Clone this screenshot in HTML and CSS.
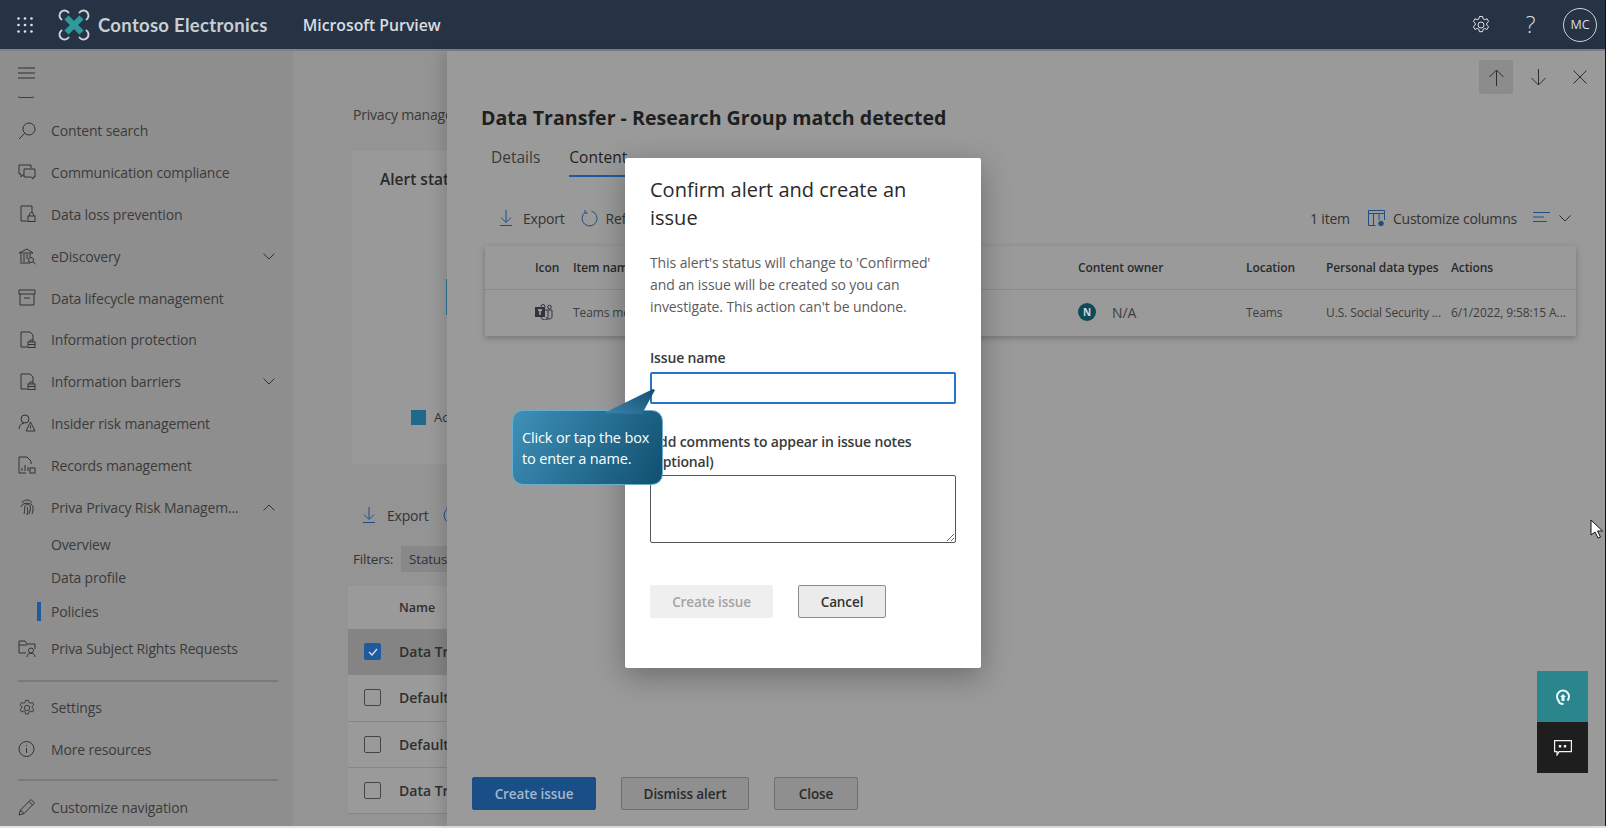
FILE: index.html
```html
<!DOCTYPE html>
<html lang="en">
<head>
  <title>Microsoft Purview</title>
  <meta charset="UTF-8">
  <link rel="stylesheet" href="styles.css">
</head>
<body>
<div class="shell">
  <header class="topbar">
    <svg class="waffle" width="16" height="16" viewBox="0 0 16 16" fill="#dfe3e6"><circle cx="1.5" cy="1.5" r="1.3"/><circle cx="8" cy="1.5" r="1.3"/><circle cx="14.5" cy="1.5" r="1.3"/><circle cx="1.5" cy="8" r="1.3"/><circle cx="8" cy="8" r="1.3"/><circle cx="14.5" cy="8" r="1.3"/><circle cx="1.5" cy="14.5" r="1.3"/><circle cx="8" cy="14.5" r="1.3"/><circle cx="14.5" cy="14.5" r="1.3"/></svg>
    <svg class="logo" width="32" height="32" viewBox="0 0 32 32" fill="none"><path d="M8.500 8.500 23.500 23.500M23.500 8.500 8.500 23.500" stroke="#2f9a9c" stroke-width="6"/><g stroke="#ccd3d6" stroke-width="2" stroke-linecap="round"><path d="M3.500 10.500A5 5 0 1 1 10.500 3.500"/><path d="M21.500 3.500A5 5 0 1 1 28.500 10.500"/><path d="M28.500 21.500A5 5 0 1 1 21.500 28.500"/><path d="M10.500 28.500A5 5 0 1 1 3.500 21.500"/></g></svg>
    <span class="brand">Contoso Electronics</span>
    <span class="product">Microsoft Purview</span>
    <div class="topbar-right">
      <svg width="20" height="20" viewBox="0 0 20 20" fill="none" stroke="#dfe3e6"><circle cx="10" cy="10" r="3"/><path d="M8.400 1.500h3.200l.5 2.400 1.700.8 2.200-1 1.600 2.800-1.800 1.600v2l1.800 1.600-1.600 2.800-2.200-1-1.700.8-.5 2.400H8.400l-.5-2.400-1.700-.8-2.200 1-1.600-2.800 1.800-1.600v-2L2.400 6.500 4 3.700l2.200 1 1.700-.8z"/></svg>
      <span class="help">?</span>
      <span class="avatar">MC</span>
    </div>
  </header>

  <div class="workspace">
    <nav class="sidebar">
      <div class="burger-row">
        <svg width="17" height="12" viewBox="0 0 17 12" stroke="#2f2f2f"><path d="M0 1h17M0 6h17M0 11h17"/></svg>
      </div>
      <div class="nav-cut"><svg width="16" height="4" viewBox="0 0 16 4" fill="none" stroke="#3a3a3a"><path d="M0 .5c1 1.500 3 1 4 1h8c1 0 3 .500 4-1"/></svg></div>
      <a class="nav-row"><svg class="nav-icon" viewBox="0 0 18 18"><circle cx="11" cy="7" r="6"/><path d="M6.800 11.200 1 17"/></svg>Content search</a>
      <a class="nav-row"><svg class="nav-icon" viewBox="0 0 18 18"><path d="M13 4V1H1v9h2v3l3-3"/><path d="M6 5h11v8h-2v2l-2-2H6z"/></svg>Communication compliance</a>
      <a class="nav-row"><svg class="nav-icon" viewBox="0 0 18 18"><path d="M9 16H3V1h11v7"/><rect x="10" y="11" width="7" height="5.500"/><path d="M11.500 11V9.500a2 2 0 0 1 4 0V11"/></svg>Data loss prevention</a>
      <a class="nav-row"><svg class="nav-icon" viewBox="0 0 18 18"><path d="M1 6 9 2l6 4zM2 16h10M3 7v8M6 7v8M9 7v5M12 7v3"/><circle cx="13" cy="13" r="2.500"/><path d="m15 15 2.500 2"/></svg>eDiscovery<svg class="chev" viewBox="0 0 12 7"><path d="m.5.5 5.500 5.500 5.500-5.500"/></svg></a>
      <a class="nav-row"><svg class="nav-icon" viewBox="0 0 18 18"><path d="M1 1h16v4H1zM2 5v11h14V5M6 9h6"/></svg>Data lifecycle management</a>
      <a class="nav-row"><svg class="nav-icon" viewBox="0 0 18 18"><path d="M9 16H3V1h9l3 3v5"/><rect x="10" y="11" width="7" height="5.500"/><path d="M12 11V9h3v2M10 13.500h7"/></svg>Information protection</a>
      <a class="nav-row"><svg class="nav-icon" viewBox="0 0 18 18"><path d="M9 16H3V1h9l3 3v5"/><rect x="10" y="11" width="7" height="5.500"/><path d="M12 11V9h3v2M10 13.500h7"/></svg>Information barriers<svg class="chev" viewBox="0 0 12 7"><path d="m.5.5 5.500 5.500 5.500-5.500"/></svg></a>
      <a class="nav-row"><svg class="nav-icon" viewBox="0 0 18 18"><circle cx="7" cy="5" r="4"/><path d="M1 15c0-3 2-5.500 5-6"/><path d="m12.500 8 4.500 9H8zM12.500 11.500v3"/></svg>Insider risk management</a>
      <a class="nav-row"><svg class="nav-icon" viewBox="0 0 18 18"><path d="M8 17H1V1h8l4 4v3M4 15v-3M7 15V9M10 15v-4"/><rect x="12" y="12" width="5" height="5"/></svg>Records management</a>
      <a class="nav-row"><svg class="nav-icon" viewBox="0 0 18 18"><path d="M4 5c2-4 8-4 10 0M3 9c1-5 11-5 12 0 0 3 0 5-1 7M6 16c1-3 0-6 1-8 1-2 4-2 5 0 1 3 0 5-1 8M9 17c1-3 1-5 0-8"/></svg>Priva Privacy Risk Managem...<svg class="chev" viewBox="0 0 12 7"><path d="m.5 6.500 5.500-5.500 5.500 5.500"/></svg></a>
      <a class="sub-row">Overview</a>
      <a class="sub-row">Data profile</a>
      <a class="sub-row sub-row-on"><span class="sub-mark"></span>Policies</a>
      <a class="nav-row"><svg class="nav-icon" viewBox="0 0 18 18"><path d="M8 13H1V1h6l2 3h8v5M1 5h8"/><circle cx="13" cy="10.500" r="2.500"/><path d="M9 17c0-5 8-5 8 0"/></svg>Priva Subject Rights Requests</a>
      <div class="nav-line"></div>
      <a class="nav-row"><svg class="nav-icon" viewBox="0 0 20 20"><circle cx="10" cy="10" r="3"/><path d="M8.400 1.500h3.200l.5 2.400 1.700.8 2.200-1 1.600 2.800-1.800 1.600v2l1.800 1.600-1.600 2.800-2.200-1-1.700.8-.5 2.400H8.400l-.5-2.400-1.700-.8-2.200 1-1.600-2.800 1.800-1.600v-2L2.400 6.500 4 3.700l2.200 1 1.700-.8z"/></svg>Settings</a>
      <a class="nav-row"><svg class="nav-icon" viewBox="0 0 18 18"><circle cx="8.500" cy="9" r="7.500"/><path d="M8.500 8v5M8.500 5v1.200"/></svg>More resources</a>
      <div class="nav-line nav-line-low"></div>
      <a class="nav-row"><svg class="nav-icon" viewBox="0 0 18 18"><path d="M1 17l1.500-5L13 1.500l3.500 3.500L6 15.500zM2.500 12 6 15.500M11 3.500 14.500 7"/></svg>Customize navigation</a>
    </nav>

    <main class="main">
      <p class="crumb">Privacy management</p>
      <section class="chart-card">
        <h2 class="chart-title">Alert status</h2>
        <div class="chart-arc"></div>
        <div class="legend"><span class="legend-swatch"></span>Active</div>
      </section>
      <div class="main-tools">
        <svg class="tool-icon" viewBox="0 0 12 16"><path d="M6 0v12M1 7.500l5 5 5-5M0 15.500h12"/></svg>
        <span>Export</span>
        <svg class="main-refresh" width="17" height="17" viewBox="0 0 17 17" fill="none" stroke="#1d4f86"><path d="M10.500 1.200A7.500 7.500 0 1 1 4 2.500M4 0v3h3"/></svg>
      </div>
      <div class="filters">Filters:<span class="chip">Status</span></div>
      <div class="policy-table">
        <div class="policy-head">Name</div>
        <div class="policy-row policy-row-on"><span class="check check-on"><svg width="10" height="8" viewBox="0 0 10 8" fill="none" stroke="#d8e2ee" stroke-width="1.300"><path d="m1 4 3 3 5-6"/></svg></span>Data Transfer</div>
        <div class="policy-row"><span class="check"></span>Default policy</div>
        <div class="policy-row"><span class="check"></span>Default policy</div>
        <div class="policy-row"><span class="check"></span>Data Transfer</div>
      </div>
    </main>

    <aside class="panel">
      <div class="panel-nav">
        <span class="panel-btn panel-btn-on"><svg width="17" height="17" viewBox="0 0 17 17" fill="none" stroke="#2d2d2d"><path d="M8.500 17V1M1.500 8l7-7 7 7"/></svg></span>
        <span class="panel-btn"><svg width="17" height="17" viewBox="0 0 17 17" fill="none" stroke="#2d2d2d"><path d="M8.500 0v16M1.500 9l7 7 7-7"/></svg></span>
        <span class="panel-btn"><svg width="14" height="14" viewBox="0 0 14 14" fill="none" stroke="#2d2d2d"><path d="m.5.500 13 13M13.500.5l-13 13"/></svg></span>
      </div>
      <h1 class="panel-title">Data Transfer - Research Group match detected</h1>
      <div class="tabs">
        <span class="tab">Details</span>
        <span class="tab tab-on">Content</span>
      </div>
      <div class="panel-tools">
        <svg class="tool-icon" viewBox="0 0 12 16"><path d="M6 0v12M1 7.500l5 5 5-5M0 15.500h12"/></svg>
        <span class="tool-label">Export</span>
        <svg class="refresh" width="17" height="17" viewBox="0 0 17 17" fill="none" stroke="#1d4f86"><path d="M10.500 1.200A7.500 7.500 0 1 1 4 2.500M4 0v3h3"/></svg>
        <span>Ref</span>
        <div class="tools-right">
          <span class="count">1 item</span>
          <svg width="17" height="17" viewBox="0 0 17 17" fill="none" stroke="#1d4f86"><path d="M.5.500h16v3H.5zM.5 3.500v12h7M5.500 3.500V15.500M11 3.500V10M16.500 3.500V10"/><circle cx="13" cy="13.500" r="2.300" fill="#1d4f86"/></svg>
          <span class="customize">Customize columns</span>
          <svg class="sort" width="17" height="12" viewBox="0 0 17 12" stroke="#1d4f86"><path d="M0 .5h17M0 5h11M0 9.500h14"/></svg>
          <svg class="sort-chev" width="12" height="7" viewBox="0 0 12 7" fill="none" stroke="#2d2d2d"><path d="m.5.500 5.500 5.500 5.500-5.500"/></svg>
        </div>
      </div>
      <div class="items">
        <div class="items-head">
          <span></span><span>Icon</span><span>Item nam</span><span>Content owner</span><span>Location</span><span>Personal data types</span><span>Actions</span>
        </div>
        <div class="items-row">
          <span></span>
          <svg width="18" height="16" viewBox="0 0 18 16" fill="none" stroke="#33333d"><rect x="0" y="3" width="10" height="10" fill="#33333d" stroke="none"/><path d="M3 6h4M5 6v5" stroke="#b8b8b8" stroke-width="1.300"/><circle cx="8" cy="2.500" r="2"/><circle cx="14.500" cy="3" r="1.800"/><path d="M10 6h7v5a3 3 0 0 1-6 2M6 13a4 4 0 0 0 7 1.500V6"/></svg>
          <span>Teams me</span>
          <span class="owner"><span class="owner-badge">N</span><span class="owner-name">N/A</span></span>
          <span>Teams</span>
          <span>U.S. Social Security ...</span>
          <span>6/1/2022, 9:58:15 A...</span>
        </div>
      </div>
      <div class="panel-foot">
        <button class="foot-btn foot-btn-main">Create issue</button>
        <button class="foot-btn foot-btn-wide">Dismiss alert</button>
        <button class="foot-btn foot-btn-small">Close</button>
      </div>
    </aside>
  </div>
</div>

<form class="modal">
  <h2 class="modal-title">Confirm alert and create an issue</h2>
  <p class="modal-text">This alert's status will change to 'Confirmed' and an issue will be created so you can investigate. This action can't be undone.</p>
  <label class="modal-label">Issue name</label>
  <input class="modal-input" type="text">
  <label class="modal-label modal-label-2">Add comments to appear in issue notes (optional)</label>
  <textarea class="modal-area"></textarea>
  <div class="modal-btns">
    <button class="btn-off" type="button">Create issue</button>
    <button class="btn-cancel" type="button">Cancel</button>
  </div>
</form>

<div class="callout">
  <svg class="callout-tail" width="52" height="26" viewBox="0 0 52 26"><defs><linearGradient id="tail" x1="0" y1="1" x2="1" y2="0"><stop offset="0" stop-color="#3a84ab"/><stop offset="1" stop-color="#124f70"/></linearGradient></defs><path d="M0 25 49 1l2 1-13 24z" fill="url(#tail)"/></svg>
  Click or tap the box<br>to enter a name.
</div>

<div class="help-stack">
  <span class="help-teal"><svg width="16" height="18" viewBox="0 0 16 18" fill="none" stroke="#e8fbfb" stroke-width="2"><path d="M3.500 12.500A6 6 0 1 1 12.500 12.500"/><path d="M3.500 12c0 3 2 4 5 4"/><path d="M8 6l3 3H9.500v4h-3V9H5z" fill="#e8fbfb" stroke="none"/></svg></span>
  <span class="help-dark"><svg width="18" height="16" viewBox="0 0 18 16" fill="none" stroke="#f3f3f3" stroke-width="1.200"><path d="M.6.6h16.800v11H5L3 15v-3.400H.6z"/><path d="M6 5v2.500M11 5v2.500" stroke-width="2.400"/></svg></span>
</div>

<svg class="cursor" width="13" height="20" viewBox="0 0 13 20"><path d="M1 1v15l4-3 3 6 2.500-1-3-6h5z" fill="#fff" stroke="#111"/></svg>
</body>
</html>
```

FILE: styles.css
```css
* { box-sizing: border-box; }

html, body { height: 100%; }

body {
  margin: 0;
  overflow: hidden;
  background: #e4e4e4;
  font-family: "Open Sans", "Noto Sans", sans-serif;
  font-size: 13.5px;
  color: #333;
}

.shell {
  height: 826px;
  border-right: 1px solid #111;
  display: flex;
  flex-direction: column;
}

/* top bar */
.topbar {
  height: 51px;
  flex: none;
  background: #263345;
  border-bottom: 2px solid #7d838a;
  display: flex;
  align-items: center;
  color: #d9dde0;
}
.waffle { margin-left: 17px; }
.logo { margin-left: 25px; }
.brand {
  margin-left: 8px;
  font-family: Lato, sans-serif;
  font-size: 18.5px;
  font-weight: 700;
  letter-spacing: .3px;
  color: #c9ced2;
}
.product {
  margin-left: 35px;
  font-size: 15.8px;
  font-weight: 600;
}
.topbar-right {
  margin-left: auto;
  margin-right: 8px;
  display: flex;
  align-items: center;
  gap: 34.5px;
}
.help { font-size: 23px; font-weight: 300; line-height: 1; }
.avatar {
  width: 34px;
  height: 34px;
  margin-left: -7px;
  border: 1px solid #cfd3d6;
  border-radius: 50%;
  display: flex;
  align-items: center;
  justify-content: center;
  font-size: 12.5px;
}

.workspace {
  flex: 1;
  display: flex;
  position: relative;
  min-height: 0;
  background: #949494;
}

/* left nav */
.sidebar {
  width: 293px;
  flex: none;
  background: #8e8e8e;
  color: #3b3b3b;
  padding-left: 18px;
}
.burger-row { height: 44px; display: flex; align-items: center; }
.nav-cut { height: 15px; line-height: 0; }
.nav-row {
  height: 41.8px;
  display: flex;
  align-items: center;
  gap: 15px;
  padding-right: 18px;
  font-size: 14px;
  letter-spacing: -.15px;
}
.nav-icon {
  width: 18px;
  height: 18px;
  flex: none;
  fill: none;
  stroke: #333;
  stroke-width: 1;
}
.chev {
  width: 12px;
  height: 7px;
  margin-left: auto;
  fill: none;
  stroke: #333;
}
.sub-row {
  height: 33.3px;
  padding-left: 33px;
  display: flex;
  align-items: center;
  font-size: 14px;
  letter-spacing: -.15px;
}
.sub-row-on { padding-left: 19px; }
.sub-mark {
  width: 4px;
  height: 19px;
  margin-right: 10px;
  background: #1d5a9e;
}
.nav-line {
  height: 2px;
  width: 260px;
  margin: 10px 0 5px;
  background: #7a7a7a;
}
.nav-line-low { margin-top: 9px; }

/* page behind the drawer */
.main {
  flex: 1;
  min-width: 0;
  overflow: hidden;
  padding-left: 60px;
  white-space: nowrap;
}
.crumb { margin: 55px 0 0; line-height: 18px; color: #383838; font-size: 14px; letter-spacing: -.2px; }
.chart-card {
  margin: 27px 0 0 -1px;
  height: 313px;
  width: 600px;
  padding: 18px 28px;
  background: #999;
  border-radius: 2px;
  position: relative;
}
.chart-title { margin: 0; font-size: 15.5px; font-weight: 600; line-height: 20px; color: #2a2a2a; }
.chart-arc {
  position: absolute;
  left: 94px;
  top: 128px;
  width: 3px;
  height: 36px;
  background: #2a7492;
}
.legend {
  position: absolute;
  left: 59px;
  top: 257px;
  display: flex;
  align-items: center;
  gap: 8px;
  font-size: 13px;
}
.legend-swatch { width: 15px; height: 15px; background: #1f6a8a; }
.main-tools {
  margin-top: 41px;
  height: 20px;
  display: flex;
  align-items: center;
  gap: 12px;
  padding-left: 10px;
  font-size: 14px;
  letter-spacing: -.2px;
}
.tool-icon {
  width: 12px;
  height: 16px;
  flex: none;
  fill: none;
  stroke: #1d4f86;
}
.main-refresh { margin-left: 2px; }
.filters {
  margin-top: 21px;
  height: 26px;
  display: flex;
  align-items: center;
  font-size: 13.5px;
  letter-spacing: -.2px;
}
.chip {
  margin-left: 8px;
  padding: 0 8px;
  height: 26px;
  line-height: 26px;
  background: #888;
}
.policy-table {
  margin: 14px 0 0 -5px;
  width: 600px;
  background: #9a9a9a;
  font-weight: 600;
  color: #2f2f2f;
}
.policy-head {
  height: 43px;
  line-height: 43px;
  padding-left: 51px;
  font-size: 12.5px;
}
.policy-row {
  height: 46.3px;
  display: flex;
  align-items: center;
  gap: 18px;
  padding-left: 16px;
  border-bottom: 1px solid #868686;
  font-size: 14px;
}
.policy-row-on { background: #848484; }
.check {
  width: 17px;
  height: 17px;
  border: 1px solid #444;
  border-radius: 2px;
  display: flex;
  align-items: center;
  justify-content: center;
}
.check-on { background: #1d5a9e; border-color: #1d5a9e; }

/* drawer */
.panel {
  position: absolute;
  left: 447px;
  top: 0;
  right: 0;
  bottom: 0;
  padding-left: 34px;
  background: #9a9a9a;
  box-shadow: -6px 0 12px rgba(0, 0, 0, .12);
  display: flex;
  flex-direction: column;
  color: #333;
}
.panel-nav {
  height: 34px;
  margin-top: 9px;
  padding-right: 8px;
  display: flex;
  justify-content: flex-end;
  gap: 8px;
}
.panel-btn {
  width: 34px;
  display: flex;
  align-items: center;
  justify-content: center;
}
.panel-btn-on { background: #8c8c8c; border-radius: 2px; }
.panel-title {
  margin: 10px 0 0;
  font-size: 19.6px;
  font-weight: 700;
  line-height: 28px;
  color: #1f1f1f;
}
.tabs {
  margin-top: 15px;
  padding-left: 10px;
  height: 30px;
  display: flex;
  gap: 29px;
  font-size: 15.5px;
}
.tab { line-height: 20px; height: 30px; color: #3a3a3a; }
.tab-on { color: #1f1f1f; border-bottom: 2px solid #1d5a9e; }
.panel-tools {
  margin-top: 29px;
  padding-left: 19px;
  padding-right: 34px;
  height: 24px;
  display: flex;
  align-items: center;
  font-size: 14px;
  letter-spacing: -.2px;
}
.tool-label { margin-left: 11px; }
.refresh { margin: 0 8px 0 16px; }
.tools-right {
  margin-left: auto;
  display: flex;
  align-items: center;
}
.customize { margin: 0 16px 0 8px; }
.count { margin-right: 18px; }
.sort-chev { margin-left: 9px; }
.items {
  margin: 16px 29px 0 4px;
  background: #9a9a9a;
  box-shadow: 0 2px 6px rgba(0, 0, 0, .25);
  font-size: 12px;
  letter-spacing: -.1px;
}
.items-head, .items-row {
  display: grid;
  grid-template-columns: 50px 38px 505px 168px 80px 125px 1fr;
  align-items: center;
  white-space: nowrap;
  overflow: hidden;
}
.items-head {
  height: 44px;
  font-weight: 600;
  color: #2a2a2a;
  border-bottom: 1px solid #8a8a8a;
}
.items-row { height: 46px; padding-bottom: 2px; color: #3d3d3d; }
.owner { display: flex; align-items: center; }
.owner-badge {
  width: 18px;
  height: 18px;
  border-radius: 50%;
  background: #0f4a57;
  color: #cfd8da;
  font-size: 10px;
  font-weight: 700;
  text-align: center;
  line-height: 18px;
}
.owner-name { margin-left: 16px; font-size: 14px; }
.panel-foot {
  margin-top: auto;
  margin-bottom: 16px;
  margin-left: -9px;
  display: flex;
  gap: 25px;
}
.foot-btn {
  width: 124px;
  height: 33px;
  padding: 0;
  border: 1px solid #6e6e6e;
  border-radius: 2px;
  background: #8f8f8f;
  font: 600 13.5px "Open Sans", sans-serif;
  letter-spacing: -.1px;
  color: #2a2a2a;
}
.foot-btn-main {
  background: #1a4e87;
  border-color: #1a4e87;
  color: #a3b7cc;
}
.foot-btn-wide { width: 128px; }
.foot-btn-small { width: 84px; }

/* confirm dialog */
.modal {
  position: absolute;
  left: 625px;
  top: 158px;
  width: 356px;
  height: 510px;
  padding: 18px 25px;
  background: #fff;
  box-shadow: 0 8px 30px rgba(0, 0, 0, .3);
  border-radius: 2px;
  display: flex;
  flex-direction: column;
}
.modal-title {
  margin: 0;
  font-size: 20px;
  font-weight: 500;
  line-height: 28px;
  max-width: 290px;
  color: #2a2a2a;
}
.modal-text {
  margin: 20px 0 0;
  line-height: 22px;
  max-width: 296px;
  color: #5c5c5c;
  font-size: 14px;
  letter-spacing: -.1px;
}
.modal-label {
  margin-top: 30px;
  line-height: 20px;
  font-weight: 600;
  font-size: 14px;
  letter-spacing: -.15px;
  color: #3a3a3a;
}
.modal-label-2 { margin-top: 28px; }
.modal-input {
  height: 32px;
  margin-top: 4px;
  border: 2px solid #2674c9;
  border-radius: 2px;
  outline: none;
}
.modal-area {
  height: 68px;
  margin-top: 3px;
  border: 1px solid #555;
  border-radius: 2px;
  outline: none;
}
.modal-btns {
  margin-top: 42px;
  display: flex;
  gap: 25px;
}
.btn-off, .btn-cancel {
  height: 33px;
  border-radius: 2px;
  font: 600 13.5px "Open Sans", sans-serif;
  letter-spacing: -.1px;
}
.btn-off {
  width: 123px;
  border: none;
  background: #efefef;
  color: #a3a3a3;
}
.btn-cancel {
  width: 88px;
  border: 1px solid #8c8c8c;
  background: #ebebeb;
  color: #333;
}

/* coach mark over the dialog */
.callout {
  position: absolute;
  left: 512px;
  top: 410px;
  width: 151px;
  height: 75px;
  padding: 17px 0 0 9px;
  border: 1px solid #69aed0;
  border-radius: 11px;
  background: linear-gradient(120deg, #3f90b9, #10506f);
  color: #fff;
  font-size: 14.5px;
  font-weight: 500;
  letter-spacing: -.15px;
  line-height: 20.5px;
  white-space: nowrap;
}
.callout-tail {
  position: absolute;
  left: 91px;
  top: -23px;
}

/* floating help buttons */
.help-stack {
  position: absolute;
  left: 1537px;
  top: 671px;
  width: 51px;
  display: flex;
  flex-direction: column;
}
.help-teal, .help-dark {
  height: 51px;
  display: flex;
  align-items: center;
  justify-content: center;
}
.help-teal { background: #2b858c; }
.help-dark { background: #1e1e1e; }

.cursor {
  position: absolute;
  left: 1590px;
  top: 519px;
}
```
